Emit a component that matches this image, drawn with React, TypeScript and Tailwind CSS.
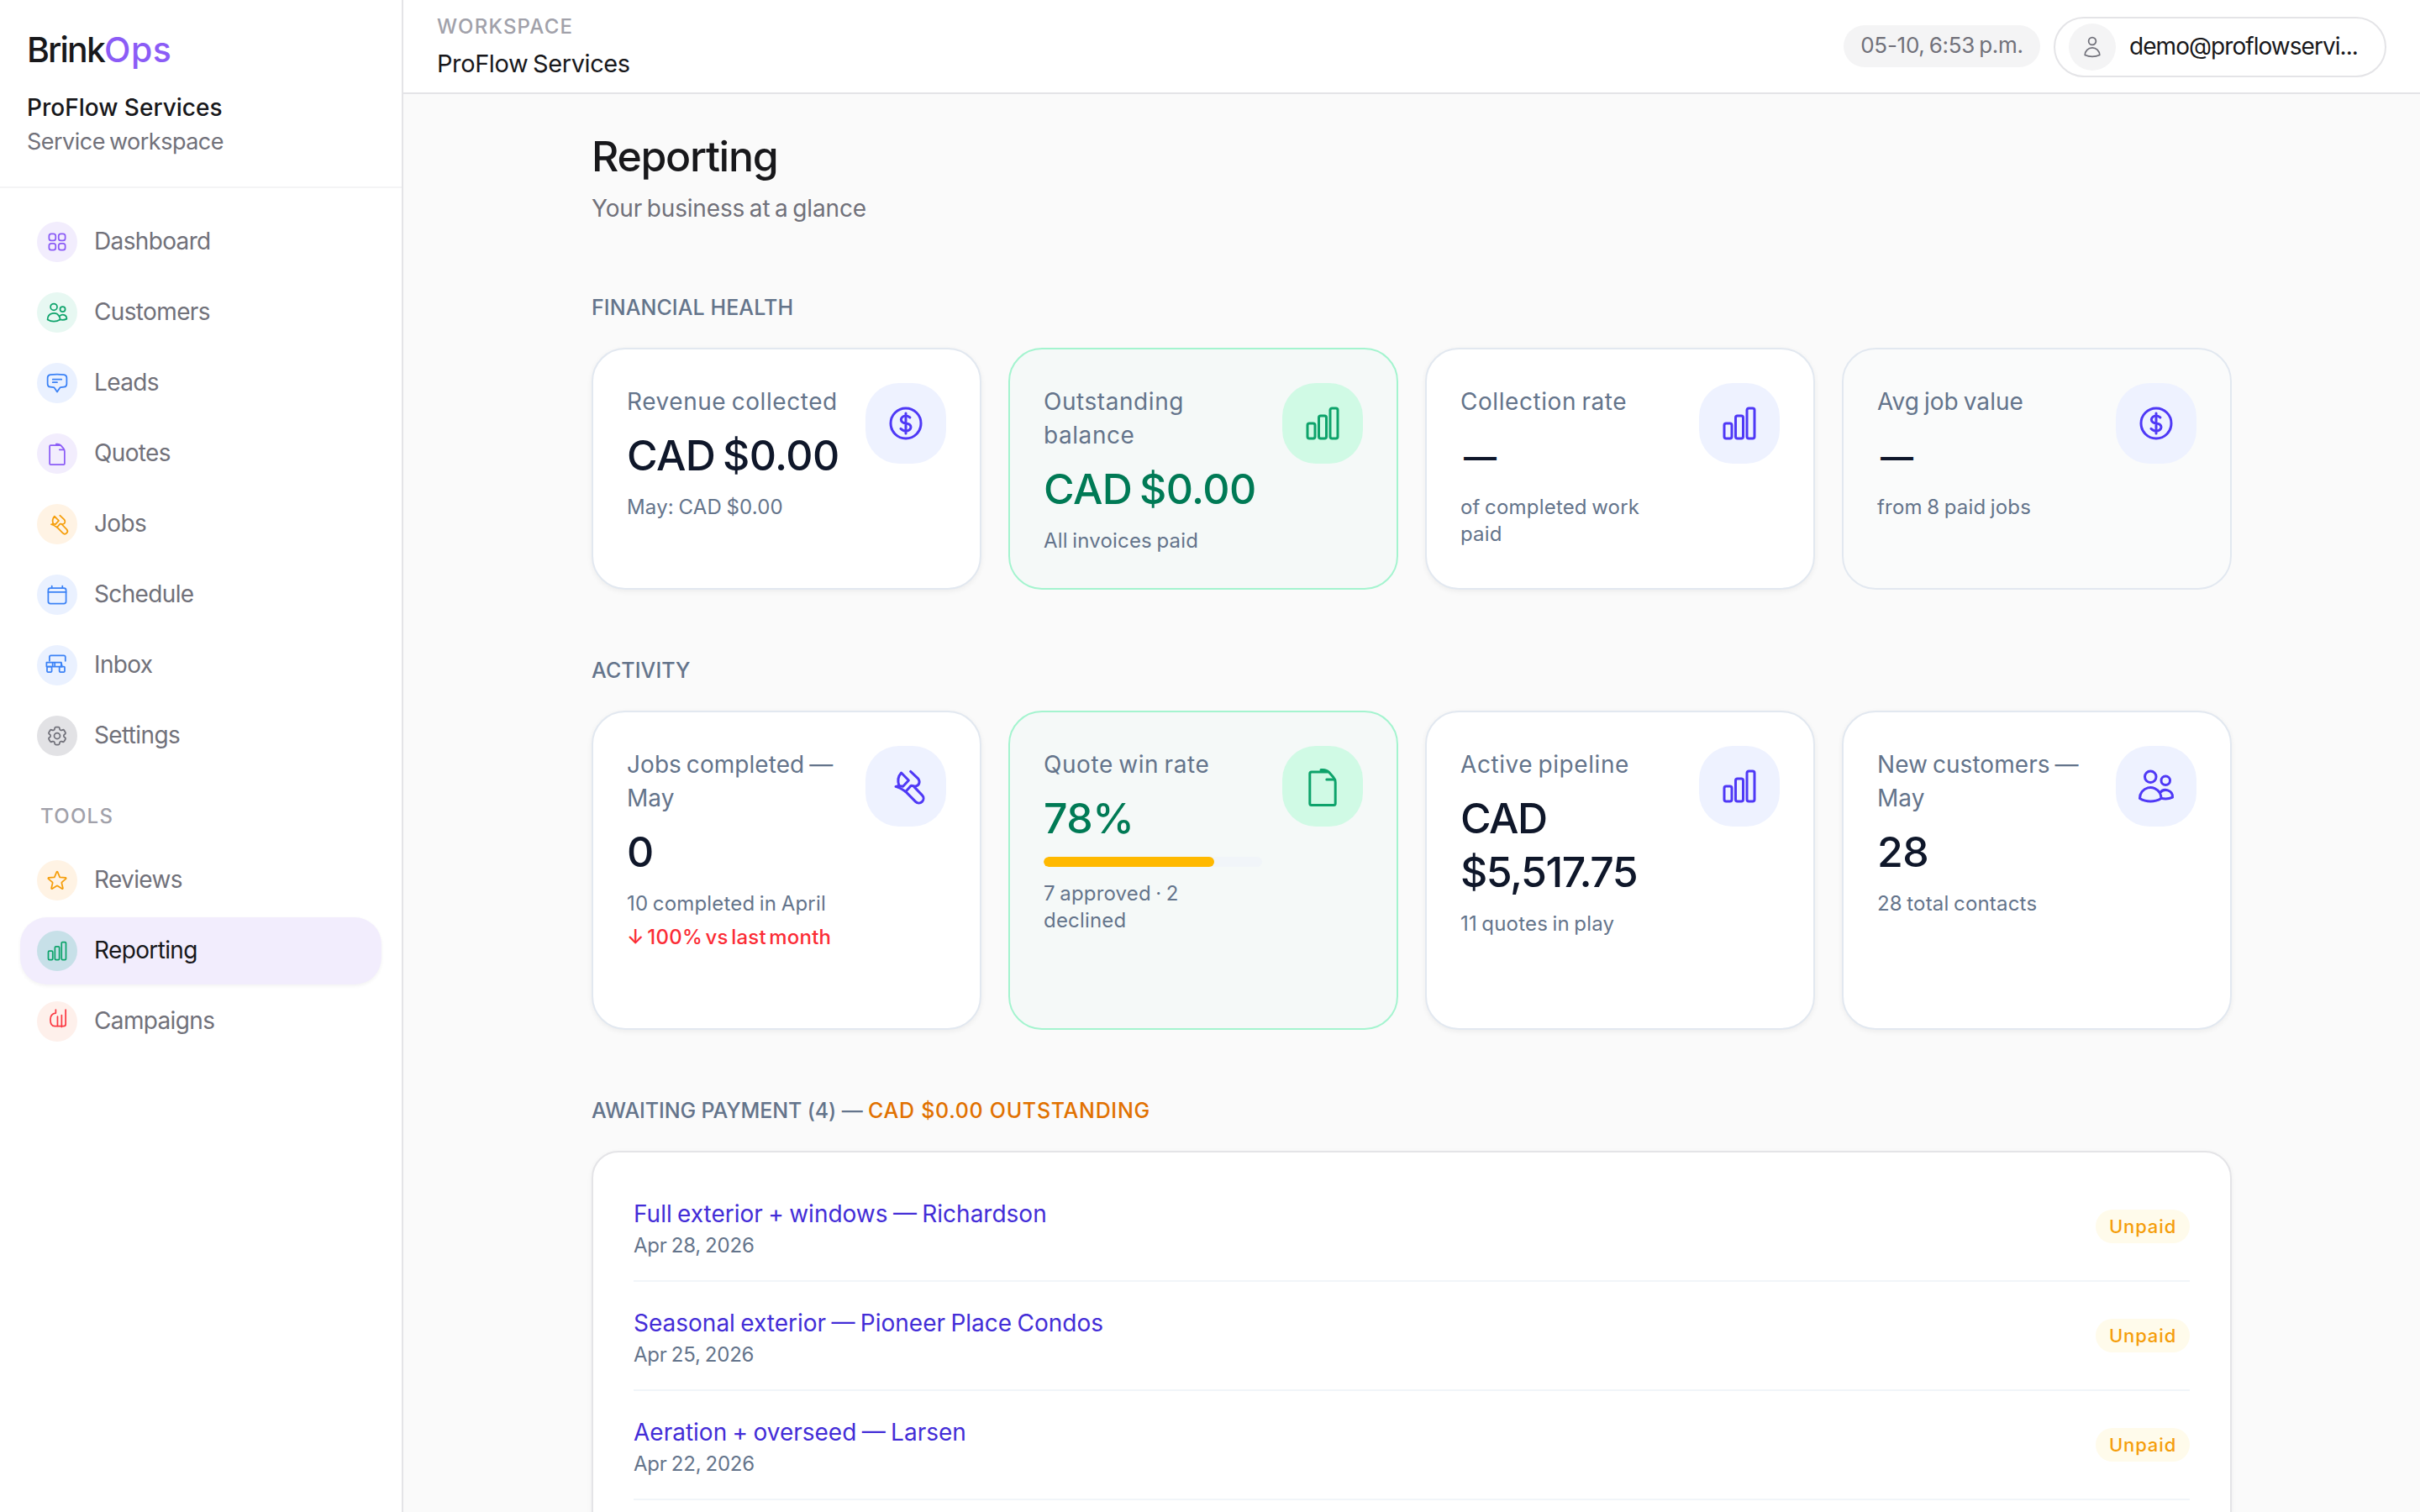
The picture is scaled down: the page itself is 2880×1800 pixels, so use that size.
import React from 'react';
import clsx from 'clsx';
import {
  HiOutlineSquares2X2,
  HiOutlineUsers,
  HiOutlineUser,
  HiOutlineChatBubbleBottomCenterText,
  HiOutlineCog6Tooth,
  HiOutlineStar,
  HiOutlineChartBar,
  HiOutlineCurrencyDollar,
} from 'react-icons/hi2';

type IconComponent = React.ComponentType<{ className?: string }>;

interface IconProps {
  className?: string;
}

const StrokeIcon: React.FC<IconProps & { children: React.ReactNode }> = ({ className, children }) => (
  <svg
    viewBox="0 0 24 24"
    fill="none"
    stroke="currentColor"
    strokeWidth={1.5}
    strokeLinecap="round"
    strokeLinejoin="round"
    className={clsx('overflow-visible', className)}
  >
    {children}
  </svg>
);

const DocumentIcon: React.FC<IconProps> = ({ className }) => (
  <StrokeIcon className={className}>
    <path d="M11 2.2h1.2c1.4 0 2.7.5 3.7 1.6l2.4 2.7c.8.9 1.3 2 1.3 3.2v12.500a1 1 0 0 1-1 1H5.400a1 1 0 0 1-1-1V4.500a1 1 0 0 1 1-1h9.800" />
    <path d="M14.400 8h4.600" />
  </StrokeIcon>
);

const WrenchIcon: React.FC<IconProps> = ({ className }) => (
  <StrokeIcon className={className}>
    <path d="M9.3 4l4.4 4.5-3.4 3.6-2.3-.4C7 9 7.2 6.3 9.3 4Z" />
    <path d="M8 11.7l-2 .5c2 .4 3.8 1.6 5.9 3l3.1-3.5c1-.3 1.8.5 2.9.3 2-.4 2.9-2.6 1.4-4.6l-4.5-4.2" />
    <path d="M11.9 15.2l5.9 6a2.75 2.75 0 0 0 3.9-3.9L16.8 12.2" />
  </StrokeIcon>
);

const CalendarIcon: React.FC<IconProps> = ({ className }) => (
  <StrokeIcon className={className}>
    <rect x="2.9" y="5.25" width="18.2" height="15.9" rx="2.2" />
    <path d="M3 9.4h18M6.6 3v2.25M17.4 3v2.25" />
  </StrokeIcon>
);

const InboxIcon: React.FC<IconProps> = ({ className }) => (
  <StrokeIcon className={className}>
    <path d="M4.2 7.6V3.6a1.5 1.5 0 0 1 1.5-1.5h13.2a1.5 1.5 0 0 1 1.5 1.5v4" />
    <path d="M1.2 9.2h15v4.1h-15zM7.4 9.2v4.1M9.6 9.2v4.1M16.2 9.2l.8 4.1" />
    <rect x="1.7" y="13.3" width="4.8" height="5.6" rx="0.8" />
    <rect x="14.3" y="13.3" width="5.4" height="5.6" rx="0.8" />
  </StrokeIcon>
);

const CampaignIcon: React.FC<IconProps> = ({ className }) => (
  <StrokeIcon className={className}>
    <path d="M10.6.2v3.3c-3.6.3-5.5 2.8-5.5 6.5 0 4.3 1.5 6.8 4.4 6.8h9.2a2 2 0 0 0 2-2V.2" />
    <path d="M12.4 7v9.6M16.6 5.6v11.9" />
  </StrokeIcon>
);

interface NavItem {
  label: string;
  icon: IconComponent;
  chip: string;
}

const mainNav: NavItem[] = [
  { label: 'Dashboard', icon: HiOutlineSquares2X2, chip: 'bg-[#f2edfd] text-[#8b5cf6]' },
  { label: 'Customers', icon: HiOutlineUsers, chip: 'bg-[#e7f8f2] text-[#0ea36b]' },
  { label: 'Leads', icon: HiOutlineChatBubbleBottomCenterText, chip: 'bg-[#eaf1ff] text-[#3b82f6]' },
  { label: 'Quotes', icon: DocumentIcon, chip: 'bg-[#f2edfd] text-[#8b5cf6]' },
  { label: 'Jobs', icon: WrenchIcon, chip: 'bg-[#fff3e4] text-[#f59e0b]' },
  { label: 'Schedule', icon: CalendarIcon, chip: 'bg-[#eaf1ff] text-[#3b82f6]' },
  { label: 'Inbox', icon: InboxIcon, chip: 'bg-[#eaf1ff] text-[#3b82f6]' },
  { label: 'Settings', icon: HiOutlineCog6Tooth, chip: 'bg-[#e2e2e5] text-[#71717a]' },
];

const toolsNav: NavItem[] = [
  { label: 'Reviews', icon: HiOutlineStar, chip: 'bg-[#fff3e4] text-[#f59e0b]' },
  { label: 'Reporting', icon: HiOutlineChartBar, chip: 'bg-[#c7e0e8] text-[#0ea36b]' },
  { label: 'Campaigns', icon: CampaignIcon, chip: 'bg-[#fef0eb] text-[#fb3b44]' },
];

const NavLink: React.FC<{ item: NavItem; active?: boolean }> = ({ item, active }) => {
  const Icon = item.icon;
  return (
    <a
      className={clsx(
        'flex h-20 items-center gap-5 rounded-[32px] px-5',
        active ? 'bg-[#f2edfd] text-[#18181b] shadow-[0_2px_4px_rgba(0,0,0,0.05)]' : 'text-[#71717a]'
      )}
    >
      <span className={clsx('flex size-12 items-center justify-center rounded-full', item.chip)}>
        <Icon className="size-7" />
      </span>
      <span className="pb-[3px] text-[28px] leading-10 tracking-[-0.023em]">{item.label}</span>
    </a>
  );
};

const Sidebar = () => (
  <aside className="flex w-[480px] shrink-0 flex-col border-r-2 border-[#e4e4e7] bg-white">
    <div className="h-56 border-b-2 border-[#f4f4f5] px-8 pt-[35px]">
      <div className="text-[41px] leading-[48px] font-medium text-[#18181b]">
        <span className="tracking-[-0.045em]">Brink</span>
        <span className="tracking-[0.012em] text-[#8b5cf6]">Ops</span>
      </div>
      <div className="mt-[25px] text-[28px] leading-10 font-medium text-[#18181b]">ProFlow Services</div>
      <div className="mt-px text-[27px] leading-10 tracking-[-0.019em] [word-spacing:-2px] text-[#71717a]">
        Service workspace
      </div>
    </div>
    <nav className="flex flex-col gap-1 p-6">
      {mainNav.map((item) => (
        <NavLink key={item.label} item={item} />
      ))}
      <div className="mt-9 mb-4 px-6 text-[24px] leading-8 font-medium tracking-[0.053em] text-[#a1a1aa]">
        TOOLS
      </div>
      {toolsNav.map((item) => (
        <NavLink key={item.label} item={item} active={item.label === 'Reporting'} />
      ))}
    </nav>
  </aside>
);

const Header = () => (
  <header className="flex h-28 shrink-0 justify-between border-b-2 border-[#e4e4e7] bg-white px-10">
    <div className="pt-4">
      <div className="text-[24px] leading-8 font-medium tracking-[0.05em] text-[#a1a1aa]">WORKSPACE</div>
      <div className="mt-2 text-[29px] leading-10 tracking-[-0.014em] [word-spacing:-2px] text-[#18181b]">
        ProFlow Services
      </div>
    </div>
    <div className="flex items-start gap-4 pt-5">
      <div className="mt-2.5 flex h-[50px] w-[234px] items-center justify-center rounded-full bg-[#f4f4f5] pb-1 text-[26px] tracking-[-0.01em] [word-spacing:-2px] whitespace-nowrap text-[#71717a]">
        05-10, 6:53 p.m.
      </div>
      <div className="flex h-[72px] w-[396px] items-center gap-4 rounded-full border-2 border-[#e4e4e7] bg-white px-4">
        <span className="flex size-14 shrink-0 items-center justify-center rounded-full bg-[#f4f4f5] text-[#71717a]">
          <HiOutlineUser className="size-7" />
        </span>
        <span className="pb-[3px] text-[28px] tracking-[-0.034em] whitespace-nowrap text-[#18181b]">
          demo@proflowservi...
        </span>
      </div>
    </div>
  </header>
);

type Tone = 'default' | 'success' | 'muted';

interface Stat {
  label: string;
  value: string;
  sub: string;
  icon: IconComponent;
  tone?: Tone;
  progress?: number;
  trend?: string;
  tight?: boolean;
}

const financialStats: Stat[] = [
  { label: 'Revenue collected', value: 'CAD $0.00', sub: 'May: CAD $0.00', icon: HiOutlineCurrencyDollar },
  { label: 'Outstanding balance', value: 'CAD $0.00', sub: 'All invoices paid', icon: HiOutlineChartBar, tone: 'success' },
  { label: 'Collection rate', value: '—', sub: 'of completed work paid', icon: HiOutlineChartBar },
  { label: 'Avg job value', value: '—', sub: 'from 8 paid jobs', icon: HiOutlineCurrencyDollar, tone: 'muted', tight: true },
];

const activityStats: Stat[] = [
  {
    label: 'Jobs completed — May',
    value: '0',
    sub: '10 completed in April',
    icon: WrenchIcon,
    trend: '↓ 100% vs last month',
    tight: true,
  },
  { label: 'Quote win rate', value: '78%', sub: '7 approved · 2 declined', icon: DocumentIcon, tone: 'success', progress: 78 },
  { label: 'Active pipeline', value: 'CAD $5,517.75', sub: '11 quotes in play', icon: HiOutlineChartBar },
  { label: 'New customers — May', value: '28', sub: '28 total contacts', icon: HiOutlineUsers, tight: true },
];

const cardTone: Record<Tone, string> = {
  default: 'border-[#e2e8f0] bg-white shadow-[0_2px_6px_rgba(0,0,0,0.06)]',
  success: 'border-[#a4f4cf] bg-[#f5f9f8]',
  muted: 'border-[#e2e8f0] bg-[#fafbfb]',
};

const valueSize = (value: string) => {
  if (value === '—') return 'pt-1 pl-1 text-[39px] leading-[60px] font-semibold';
  if (value.length > 9) return 'text-[50px] leading-[64px] font-medium tracking-[-0.03em]';
  return 'text-[50px] leading-[64px] font-medium tracking-[-0.012em] [word-spacing:-4px]';
};

const StatCard: React.FC<{ stat: Stat }> = ({ stat }) => {
  const tone = stat.tone ?? 'default';
  const Icon = stat.icon;
  return (
    <div className={clsx('flex items-start gap-6 rounded-[40px] border-2 p-10', cardTone[tone])}>
      <div className="min-w-0 flex-1 pt-0.5">
        <p
          className={clsx(
            'text-[28px] leading-10 [word-spacing:-2px] text-[#64748b]',
            stat.tight ? 'tracking-[0.002em]' : 'tracking-[0.02em]'
          )}
        >
          {stat.label}
        </p>
        <p className={clsx('mt-3', valueSize(stat.value), tone === 'success' ? 'text-[#007a55]' : 'text-[#0f172a]')}>
          {stat.value}
        </p>
        {stat.progress !== undefined && (
          <div className="mt-3.5 mb-4 h-3 overflow-hidden rounded-full bg-[#f1f5f9]">
            <div className="h-full rounded-full bg-[#ffb900]" style={{ width: `${stat.progress}%` }} />
          </div>
        )}
        <p
          className={clsx(
            'text-[24px] leading-8 tracking-[0.008em] [word-spacing:-1.5px] text-[#64748b]',
            stat.progress === undefined && 'mt-3.5'
          )}
        >
          {stat.sub}
        </p>
        {stat.trend && (
          <p className="mt-2 text-[24px] leading-8 font-medium tracking-[0.008em] [word-spacing:-3px] whitespace-nowrap text-[#fb2c36]">
            {stat.trend}
          </p>
        )}
      </div>
      <div
        className={clsx(
          'flex size-24 shrink-0 items-center justify-center rounded-[40px]',
          tone === 'success' ? 'bg-[#d0fae5] text-[#0ea36b]' : 'bg-[#eef2ff] text-[#4f39f6]'
        )}
      >
        <Icon className="size-12" />
      </div>
    </div>
  );
};

const SectionTitle: React.FC<{ children: React.ReactNode }> = ({ children }) => (
  <h2 className="mb-[30px] pt-px text-[25px] leading-9 font-medium tracking-[0.003em] text-[#64748b]">{children}</h2>
);

const invoices = [
  { title: 'Full exterior + windows — Richardson', date: 'Apr 28, 2026' },
  { title: 'Seasonal exterior — Pioneer Place Condos', date: 'Apr 25, 2026' },
  { title: 'Aeration + overseed — Larsen', date: 'Apr 22, 2026' },
];

export default function App() {
  return (
    <div className="flex h-[1800px] w-[2880px] overflow-hidden bg-[#fafafa] font-['Inter','Open_Sans',sans-serif]">
      <Sidebar />
      <div className="flex min-w-0 flex-1 flex-col overflow-hidden">
        <Header />
        <main className="mx-auto w-[1952px] pt-11">
          <h1 className="text-[50px] leading-[60px] font-medium tracking-[-0.026em] text-[#18181b]">Reporting</h1>
          <p className="mt-3 text-[28px] leading-10 tracking-[-0.006em] [word-spacing:-2px] text-[#71717a]">
            Your business at a glance
          </p>

          <section className="mt-[79px]">
            <SectionTitle>FINANCIAL HEALTH</SectionTitle>
            <div className="grid h-[288px] grid-cols-4 gap-8">
              {financialStats.map((stat) => (
                <StatCard key={stat.label} stat={stat} />
              ))}
            </div>
          </section>

          <section className="mt-[77px]">
            <SectionTitle>ACTIVITY</SectionTitle>
            <div className="grid h-[380px] grid-cols-4 gap-8">
              {activityStats.map((stat) => (
                <StatCard key={stat.label} stat={stat} />
              ))}
            </div>
          </section>

          <section className="mt-[77px]">
            <SectionTitle>
              <span className="tracking-[-0.005em]">AWAITING PAYMENT (4) — </span>
              <span className="tracking-[0.028em] text-[#e17100]">CAD $0.00 OUTSTANDING</span>
            </SectionTitle>
            <div className="rounded-[32px] border-2 border-[#e4e4e7] bg-white px-12 pt-6 pb-40 shadow-[0_2px_6px_rgba(0,0,0,0.05)]">
              {invoices.map((invoice) => (
                <div
                  key={invoice.title}
                  className="flex h-[130px] items-center justify-between border-b-2 border-[#f1f5f9]"
                >
                  <div className="pt-1">
                    <p className="text-[28px] leading-10 [word-spacing:-1.5px] text-[#432dd7]">{invoice.title}</p>
                    <p className="mt-0.5 text-[24px] leading-8 tracking-[-0.008em] [word-spacing:-1.5px] text-[#64748b]">
                      {invoice.date}
                    </p>
                  </div>
                  <span className="flex h-10 w-28 items-center justify-center rounded-full bg-[#fffbeb] text-[22px] font-medium tracking-[0.04em] text-[#f59e0b]">
                    Unpaid
                  </span>
                </div>
              ))}
            </div>
          </section>
        </main>
      </div>
    </div>
  );
}
